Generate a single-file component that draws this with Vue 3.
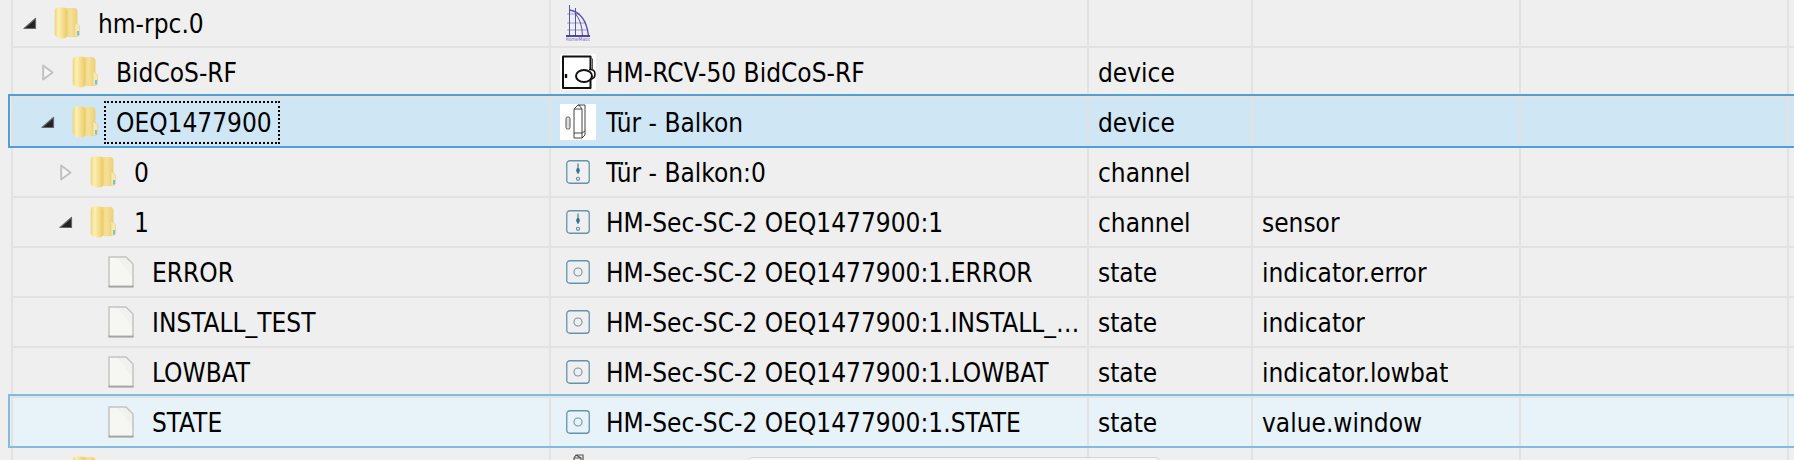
<template>
    <div class="tree">
        <div
            v-for="(row, i) in rows"
            :key="i"
            class="row"
            :class="{ first: i === 0, selected: row.mark === 'selected', hovered: row.mark === 'hovered' }"
        >
            <div class="cell name">
                <span class="indent" :style="{ width: row.depth * 18 + 'px' }"></span>
                <span class="expander">
                    <svg v-if="row.open === true" width="14" height="13" viewBox="0 0 14 13">
                        <path d="M1 11.5 L12.5 1.5 L12.5 11.5 Z" fill="#222" stroke="#666" stroke-width="1.2" stroke-linejoin="round" />
                    </svg>
                    <svg v-else-if="row.open === false" class="closed" width="12" height="17" viewBox="0 0 12 17">
                        <path d="M1.2 1.5 L10.5 8.5 L1.2 15.5 Z" fill="#f6f6f6" stroke="#c2c2c2" stroke-width="2" stroke-linejoin="round" />
                    </svg>
                </span>
                <svg v-if="row.folder" class="tree-icon" width="26" height="32" viewBox="0 0 26 32">
                    <defs>
                        <linearGradient :id="'fold' + i" x1="0" x2="1" y1="0" y2="0">
                            <stop offset="0" stop-color="#ecd27a" />
                            <stop offset="0.28" stop-color="#fdf0b4" />
                            <stop offset="0.7" stop-color="#f3da85" />
                            <stop offset="1" stop-color="#e8c96a" />
                        </linearGradient>
                        <linearGradient :id="'back' + i" x1="0" x2="1" y1="0" y2="0">
                            <stop offset="0" stop-color="#f0d67f" />
                            <stop offset="0.5" stop-color="#f5e096" />
                            <stop offset="1" stop-color="#ecd078" />
                        </linearGradient>
                    </defs>
                    <path d="M10 1 H20 Q23.5 1 23.5 5 V29 Q18 31.5 10 29 Z" :fill="'url(#back' + i + ')'" />
                    <path d="M21 15 L25.5 19 V28 Q25 29.5 21 29.5 Z" fill="#f7e8ad" stroke="#e2cd84" stroke-width="0.6" />
                    <path d="M23 24 h2 v4.6 h-2 Z" fill="#76c3d8" />
                    <path d="M3 0.5 H10 Q13.5 1 13.5 5 V28 Q13 31.5 8 31.5 Q1 31 0.7 27 V4 Q1 1 3 0.5 Z" :fill="'url(#fold' + i + ')'" />
                </svg>
                <svg v-else class="tree-icon" width="26" height="32" viewBox="0 0 26 32">
                    <path d="M1 1 H18 L25 8 V31 H1 Z" fill="#f6f6f3" />
                    <path d="M18 1 L25 8 H18 Z" fill="#e6e6e3" />
                    <path d="M9 1 L25 22 V8 L18 1 Z" fill="#f1f1ee" />
                    <path d="M1 31 V1 H18 L25 8 V31" fill="none" stroke="#c4c4c4" stroke-width="1.5" />
                    <path d="M0.5 30.6 H25.5" stroke="#a4a4a4" stroke-width="2" />
                </svg>
                <span class="label" :class="{ focused: row.mark === 'selected' }">{{ row.name }}</span>
            </div>

            <div class="cell title">
                <span class="pic">
                    <svg v-if="row.pic === 'logo'" class="logo" width="24" height="36" viewBox="0 0 24 36">
                        <g fill="none" stroke="#5a52b0" stroke-width="1">
                            <path d="M3.5 0 V31 M9.5 3 V31" />
                            <path d="M3.5 5 Q20 8 22.5 31" stroke-width="1.4" />
                            <path d="M9.5 9 Q16 16 16.5 31" />
                            <path d="M1 9 H14 M1 18 H20 M1 25 H21" stroke-opacity="0.55" />
                        </g>
                        <path d="M0 31 H24" stroke="#3d339f" stroke-width="1.8" />
                        <text x="12" y="35.5" class="logo-text" text-anchor="middle">HomeMatic</text>
                    </svg>
                    <svg v-else-if="row.pic === 'gateway'" class="white" width="36" height="36" viewBox="0 0 36 36">
                        <path d="M3 2.5 H30.5 V34 H3 Z" fill="#fff" stroke="#111" stroke-width="2" stroke-linejoin="round" />
                        <path d="M30.5 3 L32.5 5 V15" fill="none" stroke="#555" stroke-width="1" />
                        <path d="M29 15.5 Q35 15 35 20 Q35 25 30 25" fill="#fff" stroke="#111" stroke-width="1.6" />
                        <ellipse cx="24" cy="22" rx="8" ry="6" fill="#fff" stroke="#111" stroke-width="2" />
                        <path d="M6 20 V24" stroke="#111" stroke-width="2.4" />
                    </svg>
                    <svg v-else-if="row.pic === 'sensor'" class="white" width="36" height="36" viewBox="0 0 36 36">
                        <path d="M14 5 L18 1 H25 V31 L22 34 H14 Z" fill="#fff" stroke="#444" stroke-width="1" />
                        <path d="M14 5 H22 V34 M18 1 H19 L22 5 M14 29 H22 M22 29 L25 27" fill="none" stroke="#444" stroke-width="1" />
                        <rect x="6" y="13" width="4" height="12" rx="1.6" fill="#dedede" stroke="#555" stroke-width="1" />
                    </svg>
                    <svg v-else-if="row.pic === 'channel'" width="24" height="24" viewBox="0 0 24 24">
                        <rect x="0.75" y="0.75" width="22.5" height="22.5" rx="3" fill="none" stroke="#6494ac" stroke-width="1.3" />
                        <path d="M12 3.5 V14" stroke="#2f6f8f" stroke-width="1.1" />
                        <ellipse cx="12" cy="10.5" rx="1.8" ry="2.4" fill="#2f6f8f" />
                        <circle cx="12" cy="18.8" r="1.6" fill="none" stroke="#5a8ea8" stroke-width="1.1" />
                    </svg>
                    <svg v-else-if="row.pic === 'state'" width="24" height="24" viewBox="0 0 24 24">
                        <rect x="0.75" y="0.75" width="22.5" height="22.5" rx="3" fill="none" stroke="#6494ac" stroke-width="1.3" />
                        <circle cx="12" cy="12" r="4" fill="none" stroke="#6f95a8" stroke-width="1.1" />
                    </svg>
                    <svg v-else-if="row.pic === 'stub'" width="24" height="36" viewBox="0 0 24 36">
                        <path d="M8 4 L10 1 H17 V34 H8 Z M8 4 H15 V34 M10 1 L15 4" fill="none" stroke="#555" stroke-width="1.2" />
                    </svg>
                </span>
                <span class="text">{{ row.title }}</span>
            </div>

            <div class="cell"><span class="text">{{ row.type }}</span></div>
            <div class="cell"><span class="text">{{ row.role }}</span></div>
            <div class="cell"></div>
            <div class="cell"></div>
        </div>
        <div class="toast"></div>
    </div>
</template>

<script setup>
const rows = [
    { name: 'hm-rpc.0', depth: 0, open: true, folder: true, pic: 'logo', title: '', type: '', role: '' },
    { name: 'BidCoS-RF', depth: 1, open: false, folder: true, pic: 'gateway', title: 'HM-RCV-50 BidCoS-RF', type: 'device', role: '' },
    { name: 'OEQ1477900', depth: 1, open: true, folder: true, pic: 'sensor', title: 'Tür - Balkon', type: 'device', role: '', mark: 'selected' },
    { name: '0', depth: 2, open: false, folder: true, pic: 'channel', title: 'Tür - Balkon:0', type: 'channel', role: '' },
    { name: '1', depth: 2, open: true, folder: true, pic: 'channel', title: 'HM-Sec-SC-2 OEQ1477900:1', type: 'channel', role: 'sensor' },
    { name: 'ERROR', depth: 3, folder: false, pic: 'state', title: 'HM-Sec-SC-2 OEQ1477900:1.ERROR', type: 'state', role: 'indicator.error' },
    { name: 'INSTALL_TEST', depth: 3, folder: false, pic: 'state', title: 'HM-Sec-SC-2 OEQ1477900:1.INSTALL_TEST', type: 'state', role: 'indicator' },
    { name: 'LOWBAT', depth: 3, folder: false, pic: 'state', title: 'HM-Sec-SC-2 OEQ1477900:1.LOWBAT', type: 'state', role: 'indicator.lowbat' },
    { name: 'STATE', depth: 3, folder: false, pic: 'state', title: 'HM-Sec-SC-2 OEQ1477900:1.STATE', type: 'state', role: 'value.window', mark: 'hovered' },
    { name: '', depth: 1, open: false, folder: true, pic: 'stub', title: '', type: '', role: '' },
];
</script>

<style scoped>
.tree {
    position: relative;
    height: 460px;
    overflow: hidden;
    background: #efefef;
    font-family: "DejaVu Sans Condensed", "DejaVu Sans", sans-serif;
    font-size: 26px;
    color: #000;
}

.row {
    position: relative;
    display: grid;
    grid-template-columns: 538px 538px 164px 268px 268px 7px;
    height: 50px;
    margin-left: 11px;
    border-bottom: 2px solid #e2e2e2;
    box-sizing: border-box;
}

.row.first {
    height: 48px;
}

.row.selected {
    background: #cfe6f5;
}

.row.hovered {
    background: #e7f2f9;
}

.row.selected::after,
.row.hovered::after {
    content: '';
    position: absolute;
    left: -3px;
    right: 0;
    top: -4px;
    bottom: -2px;
    border: 2px solid #4f9fd9;
    border-right: 0;
    pointer-events: none;
}

.row.hovered::after {
    border-color: #80bbe2;
}

.cell {
    display: flex;
    align-items: center;
    min-width: 0;
    padding-left: 9px;
    padding-right: 5px;
    border-left: 2px solid #e2e2e2;
    overflow: hidden;
}

.cell.name {
    padding-left: 10px;
}

.cell.title {
    padding-left: 9px;
}

.indent {
    flex: none;
}

.expander {
    flex: none;
    display: flex;
    align-items: center;
    width: 31px;
}

.closed {
    margin-left: 1px;
}

.tree-icon {
    flex: none;
}

.label {
    flex: none;
    margin-left: 18px;
    margin-top: 2px;
    white-space: nowrap;
}

.label.focused {
    margin-left: 6px;
    margin-top: 0;
    padding: 4px 6px 2px 10px;
    border: 2px dotted #000;
    line-height: 33px;
}

.pic {
    flex: none;
    display: flex;
    align-items: center;
    justify-content: center;
    width: 36px;
    margin-right: 10px;
}

.white {
    background: #fff;
}

.logo-text {
    font-size: 5px;
    fill: #6a66b8;
}

.text {
    min-width: 0;
    margin-top: 2px;
    white-space: nowrap;
    overflow: hidden;
    text-overflow: ellipsis;
}

.toast {
    position: absolute;
    left: 748px;
    top: 457px;
    width: 410px;
    height: 12px;
    background: #f7f7f7;
    border: 1px solid #d4d4d4;
    border-radius: 4px 4px 0 0;
}
</style>
